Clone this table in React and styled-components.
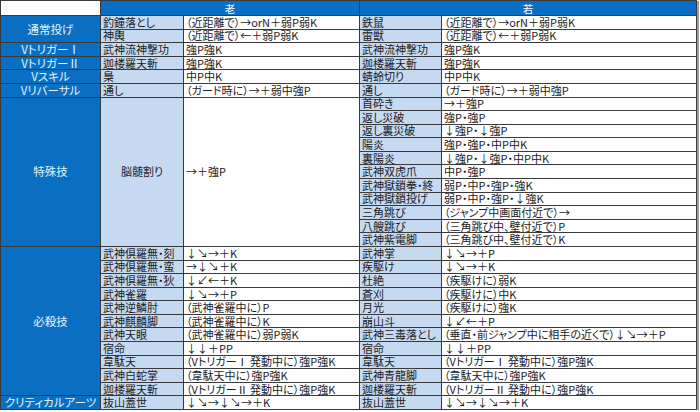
import React from "react";
import styled, { createGlobalStyle, css } from "styled-components";

const Global = createGlobalStyle`
  html, body { margin: 0; padding: 0; background: #ffffff; }
  body {
    font-family: "Noto Sans CJK JP", "Noto Sans", sans-serif;
    font-feature-settings: "palt";
  }
`;

const Sheet = styled.div`
  display: grid;
  grid-template-columns: 99px 82px 175px 81px 254px;
  grid-template-rows: 14px repeat(29, 1fr);
  gap: 1px;
  width: 697px;
  height: 410px;
  box-sizing: border-box;
  border: 1px solid #3a3a3a;
  background: #3a3a3a;
  box-shadow: 2px 1px 0 #a0a0a0;
`;

const tones = {
  blank: css`
    background: #ffffff;
  `,
  head: css`
    background: #0a6fc2;
    color: #ffffff;
    justify-content: center;
    font-size: 10.5px;
  `,
  cat: css`
    background: #0a6fc2;
    color: #e4f3ff;
    justify-content: center;
    font-size: 11.5px;
  `,
  name: css`
    background: #c5d9f1;
    color: #1c1c1c;
  `,
  cmd: css`
    background: #ffffff;
    color: #1c1c1c;
  `,
};

const Cell = styled.div`
  display: flex;
  align-items: center;
  min-width: 0;
  min-height: 0;
  white-space: nowrap;
  padding: 0 2px;
  font-size: 11px;
  line-height: 11px;
  grid-column: ${(p) => p.$c} / span ${(p) => p.$cs || 1};
  grid-row: ${(p) => p.$r} / span ${(p) => p.$rs || 1};
  ${(p) => tones[p.$tone]}
  ${(p) => p.$center && css`justify-content: center;`}
`;

const left = [
  {
    cat: "通常投げ",
    rows: [
      ["釣鐘落とし", "（近距離で）→orN＋弱P弱K"],
      ["神輿", "（近距離で）←＋弱P弱K"],
    ],
  },
  { cat: "VトリガーⅠ", rows: [["武神流神撃功", "強P強K"]] },
  { cat: "VトリガーⅡ", rows: [["迦楼羅天斬", "強P強K"]] },
  { cat: "Vスキル", rows: [["梟", "中P中K"]] },
  { cat: "Vリバーサル", rows: [["通し", "（ガード時に）→＋弱中強P"]] },
  { cat: "特殊技", merged: ["脳髄割り", "→＋強P"], span: 11 },
  {
    cat: "必殺技",
    rows: [
      ["武神倶羅無・刻", "↓↘→＋K"],
      ["武神倶羅無・蛮", "→↓↘＋K"],
      ["武神倶羅無・狄", "↓↙←＋K"],
      ["武神雀羅", "↓↘→＋P"],
      ["武神逆鱗肘", "（武神雀羅中に）P"],
      ["武神麒麟脚", "（武神雀羅中に）K"],
      ["武神天眼", "（武神雀羅中に）弱P弱K"],
      ["宿命", "↓↓＋PP"],
      ["韋駄天", "（VトリガーⅠ 発動中に）強P強K"],
      ["武神白蛇掌", "（韋駄天中に）強P強K"],
      ["迦楼羅天斬", "（VトリガーⅡ 発動中に）強P強K"],
    ],
  },
  { cat: "クリティカルアーツ", rows: [["抜山蓋世", "↓↘→↓↘→＋K"]] },
];

const right = [
  ["鉄鼠", "（近距離で）→orN＋弱P弱K"],
  ["雷獣", "（近距離で）←＋弱P弱K"],
  ["武神流神撃功", "強P強K"],
  ["迦楼羅天斬", "強P強K"],
  ["蜻蛉切り", "中P中K"],
  ["通し", "（ガード時に）→＋弱中強P"],
  ["首砕き", "→＋強P"],
  ["返し災破", "強P・強P"],
  ["返し裏災破", "↓強P・↓強P"],
  ["陽炎", "強P・強P・中P中K"],
  ["裏陽炎", "↓強P・↓強P・中P中K"],
  ["武神双虎爪", "中P・強P"],
  ["武神獄鎖拳・終", "弱P・中P・強P・強K"],
  ["武神獄鎖投げ", "弱P・中P・強P・↓強K"],
  ["三角跳び", "（ジャンプ中画面付近で）→"],
  ["八艘跳び", "（三角跳び中、壁付近で）P"],
  ["武神紫電脚", "（三角跳び中、壁付近で）K"],
  ["武神掌", "↓↘→＋P"],
  ["疾駆け", "↓↘→＋K"],
  ["杜絶", "（疾駆けに）弱K"],
  ["蒼刈", "（疾駆けに）中K"],
  ["月光", "（疾駆けに）強K"],
  ["崩山斗", "↓↙←＋P"],
  ["武神三毒落とし", "（垂直・前ジャンプ中に相手の近くで）↓↘→＋P"],
  ["宿命", "↓↓＋PP"],
  ["韋駄天", "（VトリガーⅠ 発動中に）強P強K"],
  ["武神青龍脚", "（韋駄天中に）強P強K"],
  ["迦楼羅天斬", "（VトリガーⅡ 発動中に）強P強K"],
  ["抜山蓋世", "↓↘→↓↘→＋K"],
];

function buildLeft() {
  const cells = [];
  let r = 2;
  left.forEach((g, gi) => {
    const span = g.merged ? g.span : g.rows.length;
    cells.push(
      <Cell key={`c${gi}`} $tone="cat" $c={1} $r={r} $rs={span}>
        {g.cat}
      </Cell>
    );
    if (g.merged) {
      cells.push(
        <Cell key={`m${gi}a`} $tone="name" $center $c={2} $r={r} $rs={span}>
          {g.merged[0]}
        </Cell>,
        <Cell key={`m${gi}b`} $tone="cmd" $c={3} $r={r} $rs={span}>
          {g.merged[1]}
        </Cell>
      );
    } else {
      g.rows.forEach(([n, c], i) => {
        cells.push(
          <Cell key={`l${gi}-${i}a`} $tone="name" $c={2} $r={r + i}>
            {n}
          </Cell>,
          <Cell key={`l${gi}-${i}b`} $tone="cmd" $c={3} $r={r + i}>
            {c}
          </Cell>
        );
      });
    }
    r += span;
  });
  return cells;
}

export default function App() {
  return (
    <>
      <Global />
      <Sheet>
        <Cell $tone="blank" $c={1} $r={1} />
        <Cell $tone="head" $c={2} $cs={2} $r={1}>
          老
        </Cell>
        <Cell $tone="head" $c={4} $cs={2} $r={1}>
          若
        </Cell>
        {buildLeft()}
        {right.map(([n, c], i) => (
          <React.Fragment key={`r${i}`}>
            <Cell $tone="name" $c={4} $r={i + 2}>
              {n}
            </Cell>
            <Cell $tone="cmd" $c={5} $r={i + 2}>
              {c}
            </Cell>
          </React.Fragment>
        ))}
      </Sheet>
    </>
  );
}
